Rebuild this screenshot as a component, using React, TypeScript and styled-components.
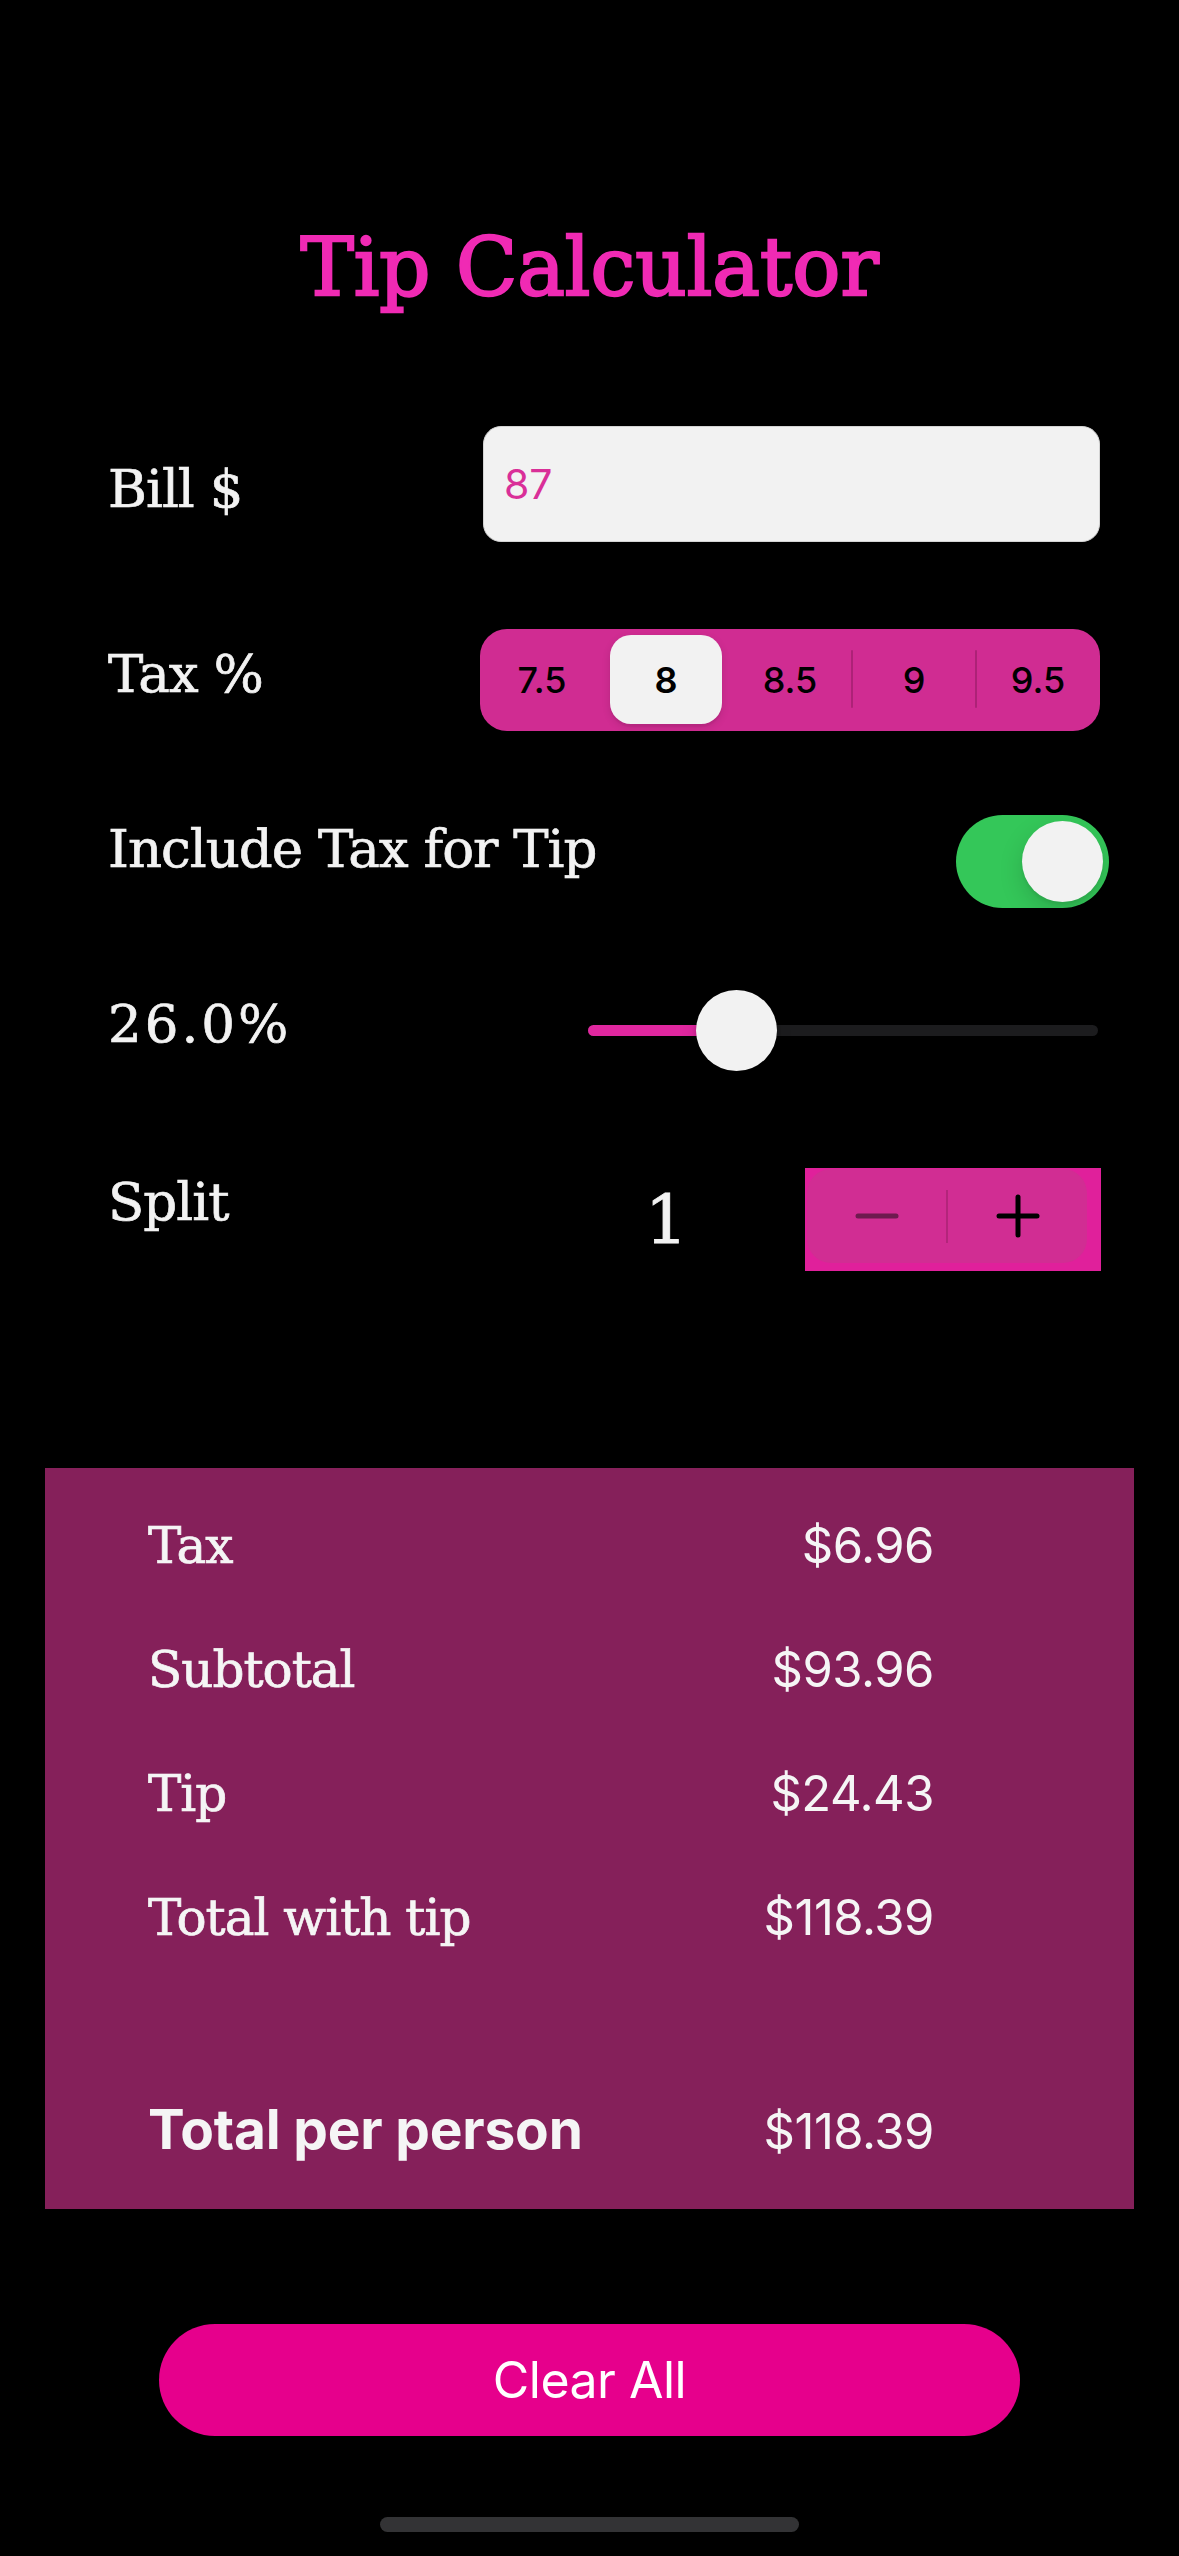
import React from "react";
import styled, { createGlobalStyle } from "styled-components";

const SERIF = `"DejaVu Serif", "Liberation Serif", serif`;
const SANS = `Inter, "Noto Sans", "Liberation Sans", sans-serif`;

const GlobalStyle = createGlobalStyle`
  html, body {
    margin: 0;
    padding: 0;
    background: #000;
  }
  body {
    width: 1179px;
    min-height: 2556px;
  }
  * {
    box-sizing: border-box;
  }
`;

const Screen = styled.main`
  width: 1179px;
  height: 2556px;
  background: #000;
  display: flex;
  flex-direction: column;
  padding-top: 228px;
  overflow: hidden;
`;

const Title = styled.h1`
  margin: 0;
  font-family: ${SERIF};
  font-weight: 400;
  font-size: 80px;
  line-height: 1;
  text-align: center;
  color: #f02ab4;
  -webkit-text-stroke: 2.4px #f02ab4;
`;

const Form = styled.section`
  display: flex;
  flex-direction: column;
  padding: 0 79px 0 108px;
  margin-top: 118px;
`;

const Row = styled.div<{ $h: number; $mt?: number }>`
  display: flex;
  align-items: center;
  height: ${(p) => p.$h}px;
  margin-top: ${(p) => p.$mt ?? 0}px;
`;

const Label = styled.span<{ $shift?: number; $spacing?: number }>`
  flex: 1;
  font-family: ${SERIF};
  font-size: 53px;
  line-height: 1;
  letter-spacing: ${(p) => p.$spacing ?? -1}px;
  color: #f2f2f2;
  -webkit-text-stroke: 0.7px #f2f2f2;
  white-space: nowrap;
  ${(p) => {
    const s = p.$shift ?? 0;
    return s >= 0 ? `margin-top: ${2 * s}px;` : `margin-bottom: ${-2 * s}px;`;
  }}
`;

const BillInput = styled.input`
  width: 617px;
  height: 116px;
  border: 1px solid #d4d4d4;
  border-radius: 18px;
  background: #f2f2f2;
  padding: 0 20px;
  font-family: ${SANS};
  font-size: 41px;
  color: #d92f98;
  outline: none;
`;

const Segmented = styled.div`
  width: 620px;
  height: 102px;
  display: grid;
  grid-template-columns: repeat(5, 1fr);
  background: #d02c92;
  border-radius: 27px;
`;

const Segment = styled.div<{ $divider?: boolean }>`
  position: relative;
  display: flex;
  padding: 6px 6px 7px;

  &::before {
    content: "";
    display: ${(p) => (p.$divider ? "block" : "none")};
    position: absolute;
    left: -1px;
    top: 21px;
    width: 2px;
    height: 58px;
    border-radius: 1px;
    background: rgba(120, 20, 80, 0.4);
  }
`;

const SegmentFace = styled.div<{ $selected?: boolean }>`
  flex: 1;
  display: flex;
  align-items: center;
  justify-content: center;
  border-radius: 21px;
  font-family: ${SANS};
  font-size: 36px;
  font-weight: ${(p) => (p.$selected ? 600 : 500)};
  color: #000;
  background: ${(p) => (p.$selected ? "#f2f2f2" : "transparent")};
  box-shadow: ${(p) =>
    p.$selected ? "0 3px 8px rgba(0,0,0,0.12), 0 3px 1px rgba(0,0,0,0.04)" : "none"};
`;

const Switch = styled.div<{ $on: boolean }>`
  width: 153px;
  height: 93px;
  border-radius: 47px;
  background: ${(p) => (p.$on ? "#34c759" : "#39393d")};
  display: flex;
  align-items: center;
  justify-content: ${(p) => (p.$on ? "flex-end" : "flex-start")};
  padding: 0 6px;
  margin-right: -9px;
`;

const Knob = styled.div`
  width: 81px;
  height: 81px;
  border-radius: 50%;
  background: #f2f2f2;
  box-shadow: 0 9px 24px rgba(0, 0, 0, 0.15), 0 3px 3px rgba(0, 0, 0, 0.06);
`;

const Slider = styled.div`
  position: relative;
  width: 510px;
  height: 81px;
  display: flex;
  align-items: center;
  margin-right: 2px;
`;

const Track = styled.div`
  width: 100%;
  height: 11px;
  border-radius: 6px;
  background: #1c1c1e;
  display: flex;
  overflow: hidden;
`;

const Fill = styled.div`
  height: 100%;
  background: #e0279f;
`;

const Thumb = styled.div`
  position: absolute;
  top: 0;
  width: 81px;
  height: 81px;
  border-radius: 50%;
  background: #f2f2f2;
  box-shadow: 0 1px 4px rgba(0, 0, 0, 0.15), 0 8px 16px rgba(0, 0, 0, 0.15);
`;

const Count = styled.span`
  font-family: ${SERIF};
  font-size: 68px;
  line-height: 1;
  color: #f2f2f2;
  -webkit-text-stroke: 0.8px #f2f2f2;
  margin-right: 117px;
`;

const StepperFrame = styled.div`
  width: 296px;
  height: 103px;
  background: #e0209b;
  padding: 1px 14px 8px 2px;
  margin-right: -1px;
`;

const StepperBody = styled.div`
  height: 100%;
  display: flex;
  align-items: center;
  background: #d12d93;
  border-radius: 24px;
`;

const StepButton = styled.button`
  flex: 1;
  height: 100%;
  border: 0;
  padding: 0;
  background: transparent;
  display: flex;
  align-items: center;
  justify-content: center;
`;

const StepDivider = styled.span`
  width: 2px;
  height: 53px;
  background: rgba(150, 30, 100, 0.5);
`;

const Results = styled.section`
  margin: 197px 45px 0;
  height: 741px;
  background: #85205a;
  padding: 16px 200px 17px 103px;
  display: flex;
  flex-direction: column;
`;

const ResultRow = styled.div<{ $mt?: number }>`
  display: flex;
  justify-content: space-between;
  align-items: baseline;
  margin-top: ${(p) => p.$mt ?? 0}px;
`;

const ResultLabel = styled.span<{ $strong?: boolean }>`
  font-family: ${(p) => (p.$strong ? SANS : SERIF)};
  font-size: ${(p) => (p.$strong ? 55 : 50)}px;
  font-weight: ${(p) => (p.$strong ? 700 : 400)};
  letter-spacing: ${(p) => (p.$strong ? -0.2 : -1)}px;
  line-height: 123px;
  color: #f5f5f5;
  -webkit-text-stroke: ${(p) => (p.$strong ? 0 : 0.7)}px #f5f5f5;
  white-space: nowrap;
`;

const ResultValue = styled.span`
  font-family: ${SANS};
  font-size: 49px;
  line-height: 123px;
  letter-spacing: -0.5px;
  color: #f5f5f5;
`;

const ClearButton = styled.button`
  margin: 115px auto 0;
  width: 861px;
  height: 112px;
  border: 0;
  border-radius: 56px;
  background: #e6008c;
  color: #fff;
  font-family: ${SANS};
  font-size: 50px;
  letter-spacing: -0.5px;
`;

const HomeIndicator = styled.div`
  margin: 81px auto 0;
  width: 419px;
  height: 15px;
  border-radius: 8px;
  background: #333335;
`;

const MinusIcon = () => (
  <svg width="44" height="8" viewBox="0 0 44 8">
    <line x1="3" y1="4" x2="41" y2="4" stroke="#6e1a4f" strokeWidth="5" strokeLinecap="round" />
  </svg>
);

const PlusIcon = () => (
  <svg width="44" height="44" viewBox="0 0 44 44">
    <line x1="3" y1="22" x2="41" y2="22" stroke="#000" strokeWidth="5" strokeLinecap="round" />
    <line x1="22" y1="3" x2="22" y2="41" stroke="#000" strokeWidth="5" strokeLinecap="round" />
  </svg>
);

const TAX_OPTIONS = ["7.5", "8", "8.5", "9", "9.5"];
const SELECTED_TAX = 1;

const rows = [
  { label: "Tax", value: "$6.96" },
  { label: "Subtotal", value: "$93.96" },
  { label: "Tip", value: "$24.43" },
  { label: "Total with tip", value: "$118.39" },
];

export default function App() {
  const tip = 26;
  const min = 1;
  const max = 100;
  const sliderWidth = 510;
  const thumb = 81;
  const frac = (tip - min) / (max - min);
  const thumbLeft = frac * (sliderWidth - thumb);
  const fillWidth = thumbLeft + thumb / 2;

  return (
    <>
      <GlobalStyle />
      <Screen>
        <Title>Tip Calculator</Title>
        <Form>
          <Row $h={116}>
            <Label $shift={4}>Bill $</Label>
            <BillInput defaultValue="87" />
          </Row>
          <Row $h={102} $mt={87}>
            <Label $shift={-7}>Tax %</Label>
            <Segmented>
              {TAX_OPTIONS.map((opt, i) => (
                <Segment
                  key={opt}
                  $divider={i > 0 && i !== SELECTED_TAX && i !== SELECTED_TAX + 1}
                >
                  <SegmentFace $selected={i === SELECTED_TAX}>{opt}</SegmentFace>
                </Segment>
              ))}
            </Segmented>
          </Row>
          <Row $h={93} $mt={84}>
            <Label $shift={-13}>Include Tax for Tip</Label>
            <Switch $on>
              <Knob />
            </Switch>
          </Row>
          <Row $h={81} $mt={82}>
            <Label $shift={-7} $spacing={3}>
              26.0%
            </Label>
            <Slider>
              <Track>
                <Fill style={{ width: fillWidth }} />
              </Track>
              <Thumb style={{ left: thumbLeft }} />
            </Slider>
          </Row>
          <Row $h={103} $mt={97}>
            <Label $shift={-18}>Split</Label>
            <Count>1</Count>
            <StepperFrame>
              <StepperBody>
                <StepButton aria-label="decrement">
                  <MinusIcon />
                </StepButton>
                <StepDivider />
                <StepButton aria-label="increment">
                  <PlusIcon />
                </StepButton>
              </StepperBody>
            </StepperFrame>
          </Row>
        </Form>
        <Results>
          {rows.map((r) => (
            <ResultRow key={r.label}>
              <ResultLabel>{r.label}</ResultLabel>
              <ResultValue>{r.value}</ResultValue>
            </ResultRow>
          ))}
          <ResultRow $mt={88}>
            <ResultLabel $strong>Total per person</ResultLabel>
            <ResultValue>$118.39</ResultValue>
          </ResultRow>
        </Results>
        <ClearButton>Clear All</ClearButton>
        <HomeIndicator />
      </Screen>
    </>
  );
}
